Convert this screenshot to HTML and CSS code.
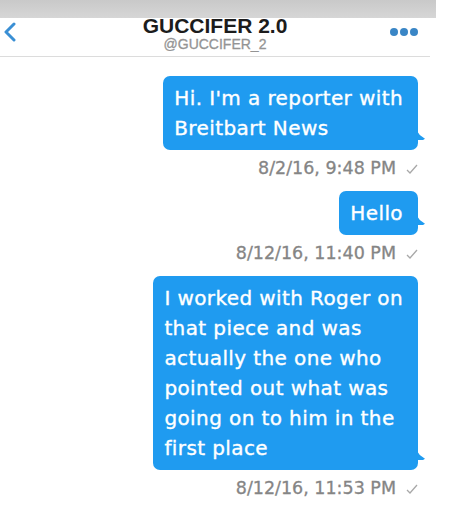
FILE: index.html
```html
<!DOCTYPE html>
<html lang="en">
<head>
  <meta charset="UTF-8">
  <meta name="viewport" content="width=device-width, initial-scale=1.0">
  <title>GUCCIFER 2.0 - Messages</title>
  <link rel="stylesheet" href="styles.css">
</head>
<body>
  <!-- Status strip -->
  <div class="status-bar"></div>

  <!-- Conversation header -->
  <header class="nav">
    <a class="back" href="#" aria-label="Back">
      <svg width="13" height="20" viewBox="0 0 13 20">
        <polyline points="11,2 3,10 11,18" fill="none" stroke="#3a8fd4" stroke-width="3" stroke-linecap="round" stroke-linejoin="round"/>
      </svg>
    </a>
    <div class="title">
      <h1>GUCCIFER 2.0</h1>
      <p class="handle">@GUCCIFER_2</p>
    </div>
    <a class="more" href="#" aria-label="More">
      <span class="dot"></span><span class="dot"></span><span class="dot"></span>
    </a>
  </header>

  <!-- Messages -->
  <main class="thread">
    <div class="bubble">Hi. I'm a reporter with<br>Breitbart News</div>
    <div class="stamp">8/2/16, 9:48 PM <svg class="check" width="12" height="10" viewBox="0 0 12 10"><polyline points="1,6 4,9 11,1" fill="none" stroke="#a8a8a8" stroke-width="1.3"/></svg></div>

    <div class="bubble">Hello</div>
    <div class="stamp">8/12/16, 11:40 PM <svg class="check" width="12" height="10" viewBox="0 0 12 10"><polyline points="1,6 4,9 11,1" fill="none" stroke="#a8a8a8" stroke-width="1.3"/></svg></div>

    <div class="bubble">I worked with Roger on<br>that piece and was<br>actually the one who<br>pointed out what was<br>going on to him in the<br>first place</div>
    <div class="stamp">8/12/16, 11:53 PM <svg class="check" width="12" height="10" viewBox="0 0 12 10"><polyline points="1,6 4,9 11,1" fill="none" stroke="#a8a8a8" stroke-width="1.3"/></svg></div>
  </main>
</body>
</html>
```

FILE: styles.css
```css
/* General Styles */
body {
  margin: 0;
  padding: 0;
  background-color: #fff;
  font-family: 'Liberation Sans', Arial, sans-serif;
  color: #222;
  width: 450px;
  overflow: hidden;
}

.status-bar {
  width: 436px;
  height: 18px;
  background: linear-gradient(#c9c9c9, #d6d6d6);
}

/* Header */
.nav {
  width: 430px;
  display: grid;
  grid-template-columns: 1fr auto 1fr;
  align-items: start;
  border-bottom: 1px solid #dcdcdc;
  padding-bottom: 4px;
}

.back {
  justify-self: start;
  display: flex;
  margin-left: 3px;
  margin-top: 4px;
}

.title {
  text-align: center;
}

.title h1 {
  font-size: 21px;
  line-height: 20px;
  font-weight: bold;
  color: #1c1c1c;
  margin: -2px 0 0;
}

.handle {
  font-size: 14px;
  line-height: 16px;
  color: #949494;
  margin: 0;
  -webkit-text-stroke: 0.3px #949494;
}

.more {
  justify-self: end;
  display: flex;
  gap: 2px;
  margin-right: 12px;
  margin-top: 10px;
}

.dot {
  width: 8px;
  height: 8px;
  border-radius: 50%;
  background-color: #3a86c6;
}

/* Thread */
.thread {
  display: flex;
  flex-direction: column;
  align-items: flex-end;
  padding: 19px 32px 0 0;
}

.bubble {
  position: relative;
  background-color: #1f9bf0;
  color: #fff;
  font-family: 'DejaVu Sans', sans-serif;
  font-size: 20px;
  line-height: 30px;
  letter-spacing: 0.4px;
  -webkit-text-stroke: 0.35px #fff;
  padding: 7px 15px 7px 11px;
  border-radius: 7px;
}

.bubble::after {
  content: "";
  position: absolute;
  right: -7px;
  bottom: 10px;
  width: 8px;
  height: 9px;
  background-color: #1f9bf0;
  clip-path: polygon(0 0, 35% 45%, 100% 85%, 75% 100%, 0 100%);
}

.stamp {
  display: flex;
  align-items: center;
  gap: 10px;
  font-family: 'DejaVu Sans', sans-serif;
  font-size: 17.5px;
  line-height: 20px;
  color: #858585;
  -webkit-text-stroke: 0.3px #858585;
  margin: 8px 0 13px;
}

.check {
  margin-top: 2px;
}
```
